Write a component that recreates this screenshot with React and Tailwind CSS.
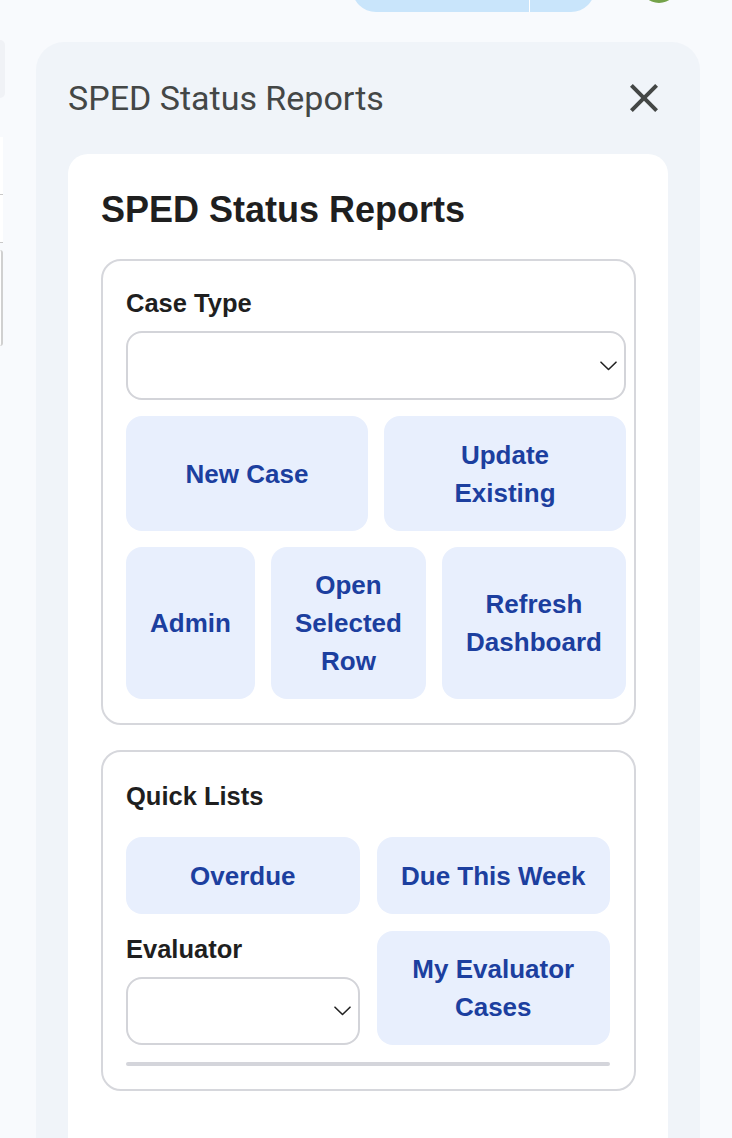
import React from 'react';

const sans = { fontFamily: '"Liberation Sans", Arial, Helvetica, sans-serif' };

function Chevron() {
  return (
    <svg width="17" height="10" viewBox="0 0 17 10" fill="none" className="shrink-0">
      <path d="M1 1.2l7.5 7.3 7.5-7.3" stroke="#222" strokeWidth="1.6" strokeLinecap="round" strokeLinejoin="round" />
    </svg>
  );
}

function FakeSelect({ className }) {
  return (
    <div className={`flex items-center justify-end rounded-[16px] border-2 border-[#d3d4d9] bg-white pr-[7px] ${className}`}>
      <Chevron />
    </div>
  );
}

function ActionButton({ lines, className }) {
  return (
    <button
      type="button"
      className={`flex items-center justify-center rounded-[16px] bg-[#e8effd] text-center text-[26px] font-bold leading-[38px] text-[#1c3f9f] ${className}`}
    >
      <span>
        {lines.map((line, i) => (
          <React.Fragment key={line}>
            {i > 0 && <br />}
            {line}
          </React.Fragment>
        ))}
      </span>
    </button>
  );
}

function LeftEdge() {
  return (
    <div className="flex w-[36px] shrink-0 flex-col">
      <div className="-mt-[2px] h-[58px] w-[5px] rounded-r-full bg-[#f0f2f6]" />
      <div className="mt-[39px] h-[58px] w-[3px] border-b border-[#c9c9c9] bg-white" />
      <div className="h-[48px] w-[3px] border-b border-[#c9c9c9] bg-white" />
      <div className="mt-[7px] h-[96px] w-[3px] rounded-r-[3px] border-r-2 border-[#d0d0d0] bg-white" />
    </div>
  );
}

export default function App() {
  return (
    <div className="h-[1138px] overflow-hidden bg-[#f8fafd]" style={sans}>
      {/* top toolbar, cut off by the window edge */}
      <div className="flex h-[42px] items-start">
        <div className="relative -mt-[36px] ml-[352px] h-[48px] w-[243px] rounded-full bg-[#c9e5fb]">
          <div className="absolute left-[177px] top-0 h-[48px] w-px bg-white" />
        </div>
        <div className="-mt-[35px] ml-[45px] h-[38px] w-[38px] rounded-full bg-[#74a24a]" />
      </div>

      <div className="flex">
        <LeftEdge />

        <aside className="w-[664px] shrink-0 rounded-t-[28px] bg-[#f0f4f9]">
          <div className="flex h-[112px] items-center justify-between px-[32px]">
            <h1 className="text-[34px] font-normal text-[#444746]" style={{ fontFamily: 'Roboto, "Noto Sans", sans-serif' }}>
              SPED Status Reports
            </h1>
            <button type="button" className="flex h-[48px] w-[48px] items-center justify-center">
              <svg width="48" height="48" viewBox="0 0 24 24" fill="#444746">
                <path d="M19 6.41L17.59 5 12 10.59 6.41 5 5 6.41 10.59 12 5 17.59 6.41 19 12 13.41 17.59 19 19 17.59 13.41 12z" />
              </svg>
            </button>
          </div>

          <div className="mx-[32px] min-h-[1000px] rounded-t-[20px] bg-white pl-[33px] pr-[32px] pt-[35px]">
            <h2 className="text-[36px] font-bold leading-[42px] text-[#1f1f1f]">SPED Status Reports</h2>

            <section className="mt-[28px] rounded-[20px] border-2 border-[#d6d7dc] pb-[24px] pl-[23px] pt-[23px]">
              <div className="w-[500px]">
                <label className="block text-[25.5px] font-bold leading-[38px] text-[#1f1f1f]">Case Type</label>
                <FakeSelect className="mt-[9px] h-[69px]" />

                <div className="mt-[16px] grid grid-cols-2 gap-[16px]">
                  <ActionButton lines={['New Case']} className="h-[115px]" />
                  <ActionButton lines={['Update', 'Existing']} className="h-[115px]" />
                </div>

                <div className="mt-[16px] grid grid-cols-[129px_155px_184px] gap-[16px]">
                  <ActionButton lines={['Admin']} className="h-[152px]" />
                  <ActionButton lines={['Open', 'Selected', 'Row']} className="h-[152px]" />
                  <ActionButton lines={['Refresh', 'Dashboard']} className="h-[152px]" />
                </div>
              </div>
            </section>

            <section className="mt-[25px] rounded-[20px] border-2 border-[#d6d7dc] pb-[23px] pl-[23px] pr-[24px] pt-[25px]">
              <h3 className="text-[25.5px] font-bold leading-[38px] text-[#1f1f1f]">Quick Lists</h3>

              <div className="mt-[22px] grid grid-cols-2 gap-[17px]">
                <ActionButton lines={['Overdue']} className="h-[77px]" />
                <ActionButton lines={['Due This Week']} className="h-[77px]" />

                <div className="flex flex-col">
                  <label className="block text-[25.5px] font-bold leading-[37px] text-[#1f1f1f]">Evaluator</label>
                  <FakeSelect className="mt-[9px] h-[68px]" />
                </div>
                <ActionButton lines={['My Evaluator', 'Cases']} className="h-[114px]" />
              </div>

              <div className="mt-[17px] h-[4px] rounded-full bg-[#d4d5db]" />
            </section>
          </div>
        </aside>
      </div>
    </div>
  );
}
